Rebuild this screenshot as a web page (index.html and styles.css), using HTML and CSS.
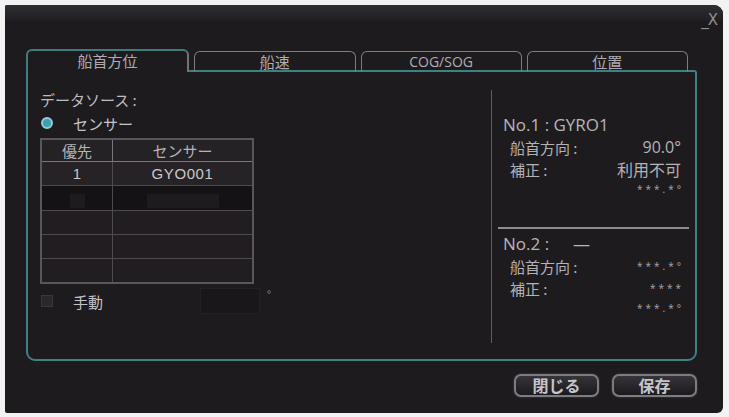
FILE: index.html
```html
<!DOCTYPE html>
<html lang="ja">
<head>
<meta charset="utf-8">
<title>データソース</title>
<link rel="stylesheet" href="styles.css">
</head>
<body>
<div class="window">
  <div class="titlebar"><span class="winctl">_X</span></div>
  <div class="content">
    <div class="tabs">
      <div class="tab active">船首方位</div>
      <div class="tab">船速</div>
      <div class="tab latin">COG/SOG</div>
      <div class="tab">位置</div>
    </div>
    <div class="panel">
      <div class="left">
        <div class="label">データソース :</div>
        <div class="radio-row"><span class="radio"></span><span class="radio-text">センサー</span></div>
        <table class="grid">
          <tr class="head"><th class="c1">優先</th><th class="c2">センサー</th></tr>
          <tr class="r1"><td>1</td><td class="sensor">GYO001</td></tr>
          <tr class="r2"><td><span class="ph ph1"></span></td><td><span class="ph ph2"></span></td></tr>
          <tr class="r3"><td></td><td></td></tr>
          <tr class="r3"><td></td><td></td></tr>
          <tr class="r3"><td></td><td></td></tr>
        </table>
        <div class="manual">
          <span class="check"></span>
          <span class="manual-text">手動</span>
          <span class="numbox"></span>
          <span class="deg">°</span>
        </div>
      </div>
      <div class="right">
        <div class="sec sec1">
          <div class="no">No.1 : GYRO1</div>
          <div class="row"><span class="k">船首方向 :</span><span class="v">90.0°</span></div>
          <div class="row"><span class="k">補正 :</span><span class="v">利用不可</span></div>
          <div class="row small"><span class="k"></span><span class="v stars">***.*°</span></div>
        </div>
        <div class="sec sec2">
          <div class="no">No.2 :<span class="dash">—</span></div>
          <div class="row"><span class="k">船首方向 :</span><span class="v stars">***.*°</span></div>
          <div class="row"><span class="k">補正 :</span><span class="v stars">****</span></div>
          <div class="row small"><span class="k"></span><span class="v stars">***.*°</span></div>
        </div>
      </div>
    </div>
    <div class="buttons">
      <div class="btn">閉じる</div>
      <div class="btn">保存</div>
    </div>
  </div>
</div>
</body>
</html>
```
FILE: styles.css
```css
html, body {
  margin: 0;
  padding: 0;
  background: #f2f2f2;
}
body {
  width: 729px;
  height: 417px;
  overflow: hidden;
  font-family: "Noto Sans CJK JP", "Open Sans", sans-serif;
}
.window {
  margin: 5px 0 0 5px;
  width: 718px;
  height: 408px;
  box-sizing: border-box;
  background: #1e1b1f;
  border-radius: 2px 9px 6px 2px;
  overflow: hidden;
}
.titlebar {
  height: 16px;
  background: linear-gradient(#2f2e31, #211e23);
  display: flex;
  justify-content: flex-end;
  align-items: flex-end;
  padding-right: 6px;
}
.winctl {
  font-family: "DejaVu Sans", sans-serif;
  font-size: 15px;
  line-height: 14px;
  color: #8f8e93;
  letter-spacing: -1px;
  margin-bottom: -6px;
}
.content {
  padding: 28px 26px 0 21px;
}
.tabs {
  display: flex;
  align-items: flex-end;
  gap: 5px;
  margin: 0 9px -2px 0;
  position: relative;
  z-index: 1;
}
.tab {
  flex: 1;
  height: 21px;
  box-sizing: border-box;
  border: 1px solid #7d7c80;
  border-bottom: none;
  border-radius: 6px 6px 0 0;
  color: #aeadb2;
  font-size: 15px;
  line-height: 19px;
  text-align: center;
}
.tab.latin {
  font-family: "Open Sans", sans-serif;
  font-size: 14px;
}
.tab.active {
  height: 23px;
  border: 2px solid #3d7d80;
  border-bottom: none;
  border-right-color: #6d7577;
  background: #1e1b1f;
  line-height: 19px;
}
.panel {
  height: 291px;
  box-sizing: border-box;
  border: 2px solid #3c8184;
  border-radius: 0 3px 9px 9px;
  display: flex;
}
.left {
  width: 463px;
  padding: 18px 0 0 12px;
  box-sizing: border-box;
}
.label {
  font-size: 15px;
  line-height: 20px;
  color: #bdbcc1;
}
.radio-row {
  display: flex;
  align-items: center;
  height: 20px;
  margin-top: 3px;
}
.radio {
  width: 8px;
  height: 8px;
  border-radius: 50%;
  background: #3e9fae;
  border: 2px solid #8fcfd8;
  margin-left: 1px;
}
.radio-text {
  margin-left: 20px;
  font-size: 15px;
  color: #c4c3c8;
}
.grid {
  margin-top: 5px;
  width: 214px;
  border-collapse: collapse;
  border: 2px solid #5a575b;
  table-layout: fixed;
}
.grid th, .grid td {
  border: 1px solid #4e4b4f;
  padding: 0;
  text-align: center;
  font-weight: normal;
}
.grid .c1 { width: 70px; }
.grid th {
  height: 21px;
  background: #252226;
  border-color: #7a787c;
  color: #b4b3b8;
  font-size: 15px;
  line-height: 20px;
}
.grid td {
  height: 23px;
}
.r1 td {
  background: #262226;
  color: #c9c8cd;
  font-size: 15px;
  font-family: "Liberation Sans", sans-serif;
}
.sensor {
  letter-spacing: 0.6px;
}
.r2 td {
  background: #151216;
}
.ph {
  display: inline-block;
  height: 14px;
  background: #1e1b1f;
  vertical-align: middle;
}
.ph1 { width: 15px; }
.ph2 { width: 72px; }
.r3 td {
  background: #211d21;
}
.manual {
  display: flex;
  align-items: center;
  height: 26px;
  margin-top: 4px;
}
.check {
  width: 10px;
  height: 10px;
  margin-left: 1px;
  background: #2b282c;
  border: 1px solid #3a373b;
}
.manual-text {
  margin-left: 20px;
  font-size: 15px;
  color: #c4c3c8;
}
.numbox {
  width: 58px;
  height: 24px;
  margin-left: 97px;
  background: #1a171b;
  border: 1px solid #242125;
}
.deg {
  align-self: flex-start;
  margin-left: 7px;
  font-size: 11px;
  line-height: 12px;
  color: #9a999e;
}
.right {
  flex: 1;
  margin: 18px 0 16px 0;
  border-left: 1px solid #605d62;
  padding: 0 6px;
  display: flex;
  flex-direction: column;
}
.sec {
  padding: 0 8px 0 5px;
}
.sec1 {
  height: 139px;
  box-sizing: border-box;
  padding-top: 24px;
  border-bottom: 2px solid #8d8c90;
}
.sec2 {
  padding-top: 4px;
}
.no {
  font-family: "Open Sans", "Noto Sans CJK JP", sans-serif;
  font-size: 17px;
  line-height: 22px;
  color: #b6b5ba;
}
.dash {
  margin-left: 24px;
}
.row {
  display: flex;
  justify-content: space-between;
  align-items: center;
  height: 22px;
  padding-left: 7px;
  font-size: 15px;
  color: #b3b2b7;
}
.row .v {
  font-family: "Open Sans", "Noto Sans CJK JP", sans-serif;
  font-size: 16px;
}
.row.small {
  height: 18px;
}
.v.stars {
  font-size: 10px;
  letter-spacing: 3px;
  margin-right: -3px;
  color: #a9a8ad;
}
.buttons {
  display: flex;
  justify-content: flex-end;
  gap: 13px;
  margin-top: 13px;
}
.btn {
  width: 85px;
  height: 23px;
  box-sizing: border-box;
  border: 2px solid #7d7c80;
  border-radius: 7px;
  background: linear-gradient(#36343a, #1c1a1e);
  color: #c6c5ca;
  font-size: 16px;
  font-weight: bold;
  line-height: 19px;
  text-align: center;
  box-shadow: 0 0 2px #55545a;
}
```
